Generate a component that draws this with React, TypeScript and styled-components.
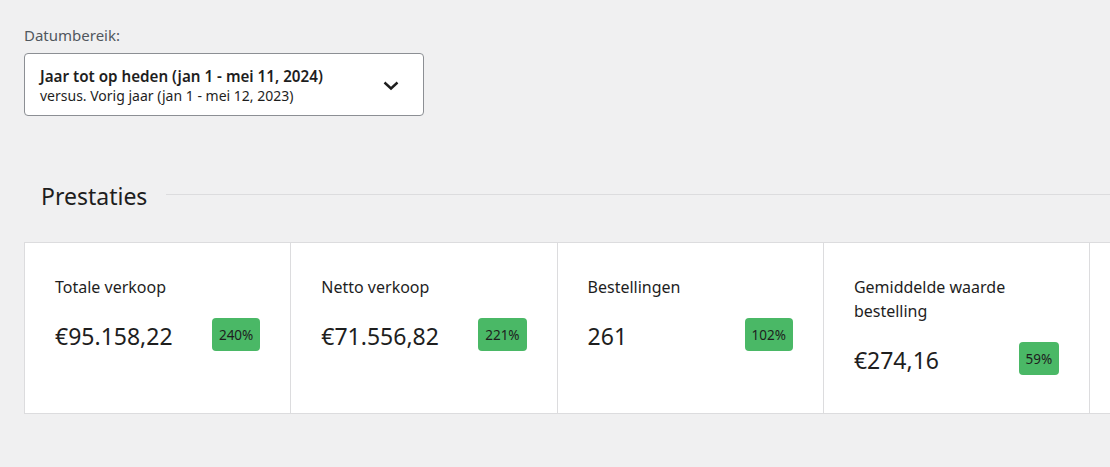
import { createGlobalStyle } from "styled-components";
import styled from "styled-components";

const GlobalStyle = createGlobalStyle`
  html, body {
    margin: 0;
    padding: 0;
    background: #f0f0f1;
    overflow: hidden;
  }
  body {
    font-family: "Noto Sans", "Open Sans", sans-serif;
    color: #1e1e1e;
  }
`;

interface Stat {
  label: string;
  value: string;
  delta: string;
}

const stats: Stat[] = [
  { label: "Totale verkoop", value: "€95.158,22", delta: "240%" },
  { label: "Netto verkoop", value: "€71.556,82", delta: "221%" },
  { label: "Bestellingen", value: "261", delta: "102%" },
  { label: "Gemiddelde waarde bestelling", value: "€274,16", delta: "59%" },
];

function Chevron() {
  return (
    <svg width="24" height="24" viewBox="0 0 24 24" aria-hidden="true">
      <path
        d="M5.5 9.5 12 15.5 18.5 9.5"
        fill="none"
        stroke="#1e1e1e"
        strokeWidth="2.4"
      />
    </svg>
  );
}

export default function App() {
  return (
    <Page>
      <GlobalStyle />
      <FieldLabel>Datumbereik:</FieldLabel>
      <DateSelect type="button">
        <DateText>
          <DatePrimary>Jaar tot op heden (jan 1 - mei 11, 2024)</DatePrimary>
          <DateSecondary>versus. Vorig jaar (jan 1 - mei 12, 2023)</DateSecondary>
        </DateText>
        <Chevron />
      </DateSelect>

      <SectionHeader>
        <SectionTitle>Prestaties</SectionTitle>
        <SectionRule />
      </SectionHeader>

      <CardRow>
        {stats.map((s) => (
          <Card key={s.label}>
            <CardLabel>{s.label}</CardLabel>
            <ValueRow>
              <Value>{s.value}</Value>
              <Delta>{s.delta}</Delta>
            </ValueRow>
          </Card>
        ))}
        <CardFiller />
      </CardRow>
    </Page>
  );
}

const Page = styled.div`
  padding: 25px 0 0 24px;
`;

const FieldLabel = styled.div`
  font-size: 15px;
  line-height: 20px;
  color: #50575e;
  margin-bottom: 8px;
`;

const DateSelect = styled.button`
  display: flex;
  align-items: center;
  justify-content: space-between;
  box-sizing: border-box;
  width: 400px;
  height: 63px;
  padding: 0 20px 0 15px;
  background: #fff;
  border: 1px solid #8c8f94;
  border-radius: 4px;
  font-family: inherit;
  text-align: left;
  cursor: pointer;
`;

const DateText = styled.div`
  display: flex;
  flex-direction: column;
  padding-top: 2px;
`;

const DatePrimary = styled.span`
  font-size: 15.2px;
  line-height: 20px;
  font-weight: 600;
  color: #1e1e1e;
`;

const DateSecondary = styled.span`
  font-size: 14px;
  line-height: 20px;
  color: #1e1e1e;
`;

const SectionHeader = styled.div`
  display: flex;
  align-items: center;
  margin-top: 66px;
  height: 28px;
`;

const SectionTitle = styled.h2`
  margin: 0 19px 0 17px;
  font-size: 23px;
  line-height: 28px;
  font-weight: 400;
  color: #1e1e1e;
`;

const SectionRule = styled.div`
  flex: 1;
  height: 1px;
  background: #dcdcde;
  margin-top: -3px;
`;

const CardRow = styled.div`
  display: grid;
  grid-template-columns: repeat(4, 266.3px) 1fr;
  margin-top: 32px;
  background: #fff;
  border-top: 1px solid #dcdcde;
  border-bottom: 1px solid #dcdcde;
  border-left: 1px solid #dcdcde;
`;

const Card = styled.div`
  display: flex;
  flex-direction: column;
  box-sizing: border-box;
  height: 170px;
  padding: 32px 30px 0 30px;
  border-right: 1px solid #dcdcde;
`;

const CardFiller = styled.div`
  height: 170px;
`;

const CardLabel = styled.div`
  font-size: 16px;
  line-height: 24px;
  color: #1e1e1e;
`;

const ValueRow = styled.div`
  display: flex;
  align-items: center;
  justify-content: space-between;
  margin-top: 19px;
`;

const Value = styled.div`
  font-size: 23px;
  line-height: 33px;
  color: #1e1e1e;
  transform: translateY(2px);
`;

const Delta = styled.span`
  display: inline-flex;
  align-items: center;
  justify-content: center;
  box-sizing: border-box;
  height: 33px;
  padding: 0 7px;
  border-radius: 4px;
  background: #4ab866;
  font-size: 13.5px;
  color: #1e1e1e;
`;
